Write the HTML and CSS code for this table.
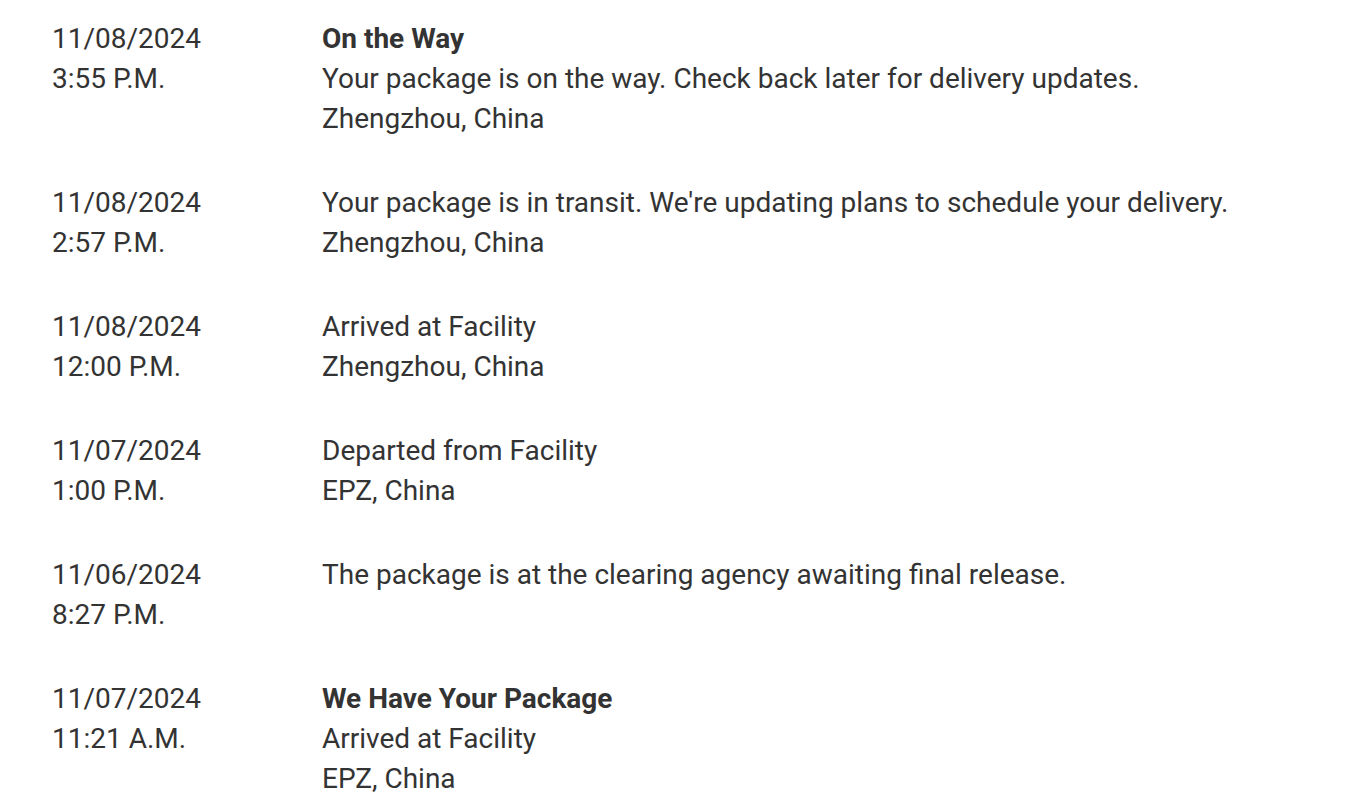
FILE: index.html
```html
<!DOCTYPE html>
<html>
<head>
<meta charset="utf-8">
<link rel="stylesheet" href="styles.css">
</head>
<body>
<div class="timeline">
  <div class="event">
    <div class="when"><div>11/08/2024</div><div>3:55 P.M.</div></div>
    <div class="what"><div class="title">On the Way</div><div>Your package is on the way. Check back later for delivery updates.</div><div>Zhengzhou, China</div></div>
  </div>
  <div class="event">
    <div class="when"><div>11/08/2024</div><div>2:57 P.M.</div></div>
    <div class="what"><div>Your package is in transit. We're updating plans to schedule your delivery.</div><div>Zhengzhou, China</div></div>
  </div>
  <div class="event">
    <div class="when"><div>11/08/2024</div><div>12:00 P.M.</div></div>
    <div class="what"><div>Arrived at Facility</div><div>Zhengzhou, China</div></div>
  </div>
  <div class="event">
    <div class="when"><div>11/07/2024</div><div>1:00 P.M.</div></div>
    <div class="what"><div>Departed from Facility</div><div>EPZ, China</div></div>
  </div>
  <div class="event">
    <div class="when"><div>11/06/2024</div><div>8:27 P.M.</div></div>
    <div class="what"><div>The package is at the clearing agency awaiting final release.</div></div>
  </div>
  <div class="event">
    <div class="when"><div>11/07/2024</div><div>11:21 A.M.</div></div>
    <div class="what"><div class="title">We Have Your Package</div><div>Arrived at Facility</div><div>EPZ, China</div></div>
  </div>
</div>
</body>
</html>
```
FILE: styles.css
```css
html, body {
  margin: 0;
  background: #fff;
}
body {
  font-family: Roboto, "Noto Sans", sans-serif;
  font-size: 28px;
  line-height: 40px;
  color: #333;
}
.timeline {
  display: flex;
  flex-direction: column;
  gap: 44px;
  padding: 19px 0 0 52px;
}
.event {
  display: flex;
}
.when {
  width: 270px;
  flex: none;
}
.title {
  font-weight: 700;
}
```
